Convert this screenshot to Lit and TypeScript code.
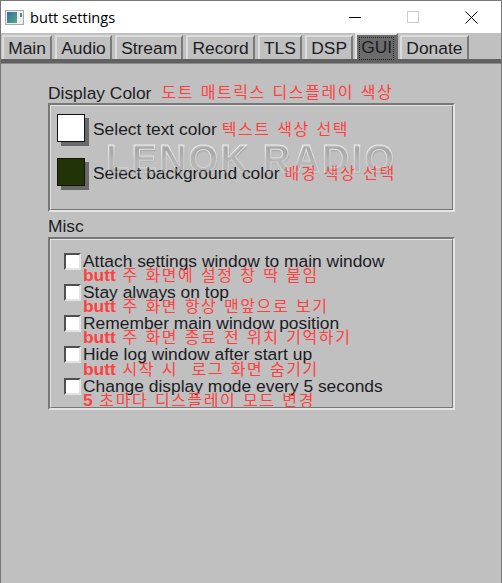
import { LitElement, css, html } from 'lit';
import { customElement } from 'lit/decorators.js';

const TABS = ['Main', 'Audio', 'Stream', 'Record', 'TLS', 'DSP', 'GUI', 'Donate'];

const MISC = [
  ['Attach settings window to main window', 'butt', ' 주 화면에 설정 창 딱 붙임'],
  ['Stay always on top', 'butt', ' 주 화면 항상 맨앞으로 보기'],
  ['Remember main window position', 'butt', ' 주 화면 종료 전 위치 기억하기'],
  ['Hide log window after start up', 'butt', ' 시작 시  로그 화면 숨기기'],
  ['Change display mode every 5 seconds', '5', ' 초마다 디스플레이 모드 변경'],
];

@customElement('app-root')
export class AppRoot extends LitElement {
  static styles = css`
    :host {
      display: block;
      width: 502px;
      height: 583px;
      box-sizing: border-box;
      overflow: hidden;
      background: #c0c0c0;
      border: 1px solid #777;
      border-bottom: none;
      font-family: 'Liberation Sans', Arial, sans-serif;
      font-size: 17.4px;
      color: #1c1c24;
    }
    .titlebar {
      display: flex;
      align-items: center;
      height: 32px;
      background: #fff;
      padding-left: 4px;
      color: #000;
    }
    .titlebar .name {
      margin-left: 6px;
      font-family: 'Open Sans', sans-serif;
      font-size: 14.6px;
    }
    .controls {
      margin-left: auto;
      display: flex;
    }
    .controls div {
      width: 58.5px;
      height: 32px;
      display: flex;
      align-items: center;
      justify-content: center;
    }
    .tabs {
      display: flex;
      align-items: flex-end;
      height: 26px;
      padding-left: 1px;
      gap: 3px;
    }
    .tab {
      height: 24px;
      box-sizing: border-box;
      padding: 1px 4.2px 0;
      line-height: 20px;
      background: #c0c0c0;
      border: 2px solid #dcdcdc;
      border-right-color: #7a7a7a;
      border-bottom: none;
    }
    .tab.active {
      height: 26px;
      background: #6b6b6b;
      margin: 0 -1px;
      padding: 2px 2px 0;
      border-color: #e4e4e4 #6b6b6b #6b6b6b #e4e4e4;
    }
    .tab.active span {
      display: block;
      border: 1px dotted #222;
      height: 21px;
      line-height: 19px;
      padding: 0 1px;
    }
    .band {
      height: 4px;
      background: #626262;
      border-bottom: 1px solid #8c8c8c;
    }
    .page {
      position: relative;
      padding: 19px 47px 0;
    }
    .legend {
      height: 20px;
      line-height: 20px;
      display: flex;
    }
    .ko {
      font-family: 'Noto Sans CJK KR', sans-serif;
      color: #ff4040;
      font-size: 16px;
      letter-spacing: 1.58px;
      word-spacing: 1.5px;
      white-space: pre;
    }
    .ko b {
      font-family: 'Liberation Sans', sans-serif;
      font-size: 17.4px;
      letter-spacing: 0;
      word-spacing: 0;
    }
    .legend .ko {
      margin: -2px 0 0 10px;
    }
    .group {
      box-sizing: border-box;
      width: 407px;
      border: 2px solid;
      border-color: #777 #e4e4e4 #e4e4e4 #777;
      position: relative;
    }
    .group::after {
      content: '';
      position: absolute;
      inset: 0;
      border: 1px solid;
      border-color: #e4e4e4 #777 #777 #e4e4e4;
    }
    .colors {
      height: 109px;
      padding: 9px 7px 0;
      display: flex;
      flex-direction: column;
      gap: 16px;
    }
    .color-row {
      display: flex;
      align-items: center;
      gap: 7px;
      height: 28px;
    }
    .swatch {
      box-sizing: border-box;
      width: 28px;
      height: 28px;
      flex: none;
      border: 1px solid #111;
      box-shadow: 4px 4px 0 #686868;
      margin-right: 1px;
    }
    .color-row .label {
      margin-top: 2px;
    }
    .color-row .ko {
      margin-left: -2px;
    }
    .misc-legend {
      margin-top: 4px;
    }
    .misc {
      margin-top: 1px;
      height: 173px;
      padding: 12.5px 15px 0;
    }
    .check-row {
      display: grid;
      grid-template-columns: 15px 1fr;
      column-gap: 3px;
      height: 31.3px;
    }
    .check {
      box-sizing: border-box;
      width: 17px;
      height: 17px;
      margin: 1px 0 0 -1px;
      background: #fff;
      border: 2px solid;
      border-color: #505050 #e4e4e4 #e4e4e4 #505050;
    }
    .check-text {
      line-height: 18px;
      height: 18px;
      white-space: nowrap;
    }
    .check-row .ko {
      grid-column: 2;
      margin-top: -3.5px;
      line-height: 15px;
      height: 15px;
    }
    .watermark {
      position: absolute;
      left: 105px;
      top: 74px;
      font-size: 38px;
      font-weight: 700;
      letter-spacing: 2.2px;
      color: transparent;
      -webkit-text-stroke: 1px rgba(245, 245, 245, 0.8);
      text-shadow: 1px 2px 1px rgba(110, 110, 110, 0.3);
      white-space: nowrap;
      pointer-events: none;
      -webkit-mask-image: linear-gradient(#000 25%, rgba(0, 0, 0, 0.35) 55%, rgba(0, 0, 0, 0.5) 80%);
      mask-image: linear-gradient(#000 25%, rgba(0, 0, 0, 0.35) 55%, rgba(0, 0, 0, 0.5) 80%);
    }
  `;

  protected render() {
    return html`
      <div class="titlebar">
        <svg width="19" height="15" viewBox="0 0 19 15">
          <defs>
            <linearGradient id="ico" x1="0" y1="0" x2="1" y2="1">
              <stop offset="0" stop-color="#2f6fa8" />
              <stop offset="1" stop-color="#5aa87a" />
            </linearGradient>
          </defs>
          <rect x="0.5" y="0.5" width="18" height="14" fill="#eef0f0" stroke="#a8a8a8" />
          <rect x="2" y="2" width="10" height="11" fill="url(#ico)" />
          <rect x="15" y="3" width="2" height="4" fill="#4a8a90" />
        </svg>
        <span class="name">butt settings</span>
        <div class="controls">
          <div>
            <svg width="12" height="12" viewBox="0 0 12 12"><path d="M0 6.5h12" stroke="#000" /></svg>
          </div>
          <div>
            <svg width="12" height="12" viewBox="0 0 12 12">
              <rect x="0.5" y="0.5" width="11" height="11" fill="none" stroke="#ccc" />
            </svg>
          </div>
          <div>
            <svg width="13" height="13" viewBox="0 0 13 13"><path d="M0.5 0.5l12 12M12.5 0.5l-12 12" stroke="#000" /></svg>
          </div>
        </div>
      </div>
      <div class="tabs">
        ${TABS.map((t) =>
          t === 'GUI'
            ? html`<div class="tab active"><span>${t}</span></div>`
            : html`<div class="tab">${t}</div>`
        )}
      </div>
      <div class="band"></div>
      <div class="page">
        <div class="legend">Display Color<span class="ko">도트 매트릭스 디스플레이 색상</span></div>
        <div class="group colors">
          <div class="color-row">
            <div class="swatch" style="background:#ffffff"></div>
            <span class="label">Select text color</span><span class="ko">텍스트 색상 선택</span>
          </div>
          <div class="color-row">
            <div class="swatch" style="background:#223308"></div>
            <span class="label">Select background color</span><span class="ko">배경 색상 선택</span>
          </div>
        </div>
        <div class="legend misc-legend">Misc</div>
        <div class="group misc">
          ${MISC.map(
            ([en, bold, ko]) => html`
              <div class="check-row">
                <div class="check"></div>
                <div class="check-text">${en}</div>
                <div class="ko"><b>${bold}</b>${ko}</div>
              </div>
            `
          )}
        </div>
        <div class="watermark">LENOK RADIO</div>
      </div>
    `;
  }
}
